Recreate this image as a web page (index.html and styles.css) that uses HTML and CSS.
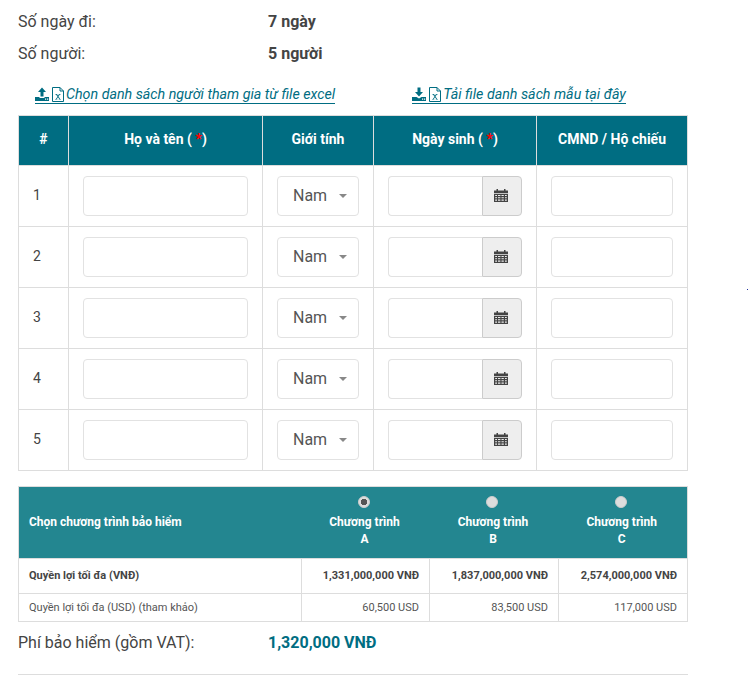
FILE: index.html
```html
<!DOCTYPE html>
<html lang="vi">
<head>
<meta charset="utf-8">
<title>Bảo hiểm</title>
<link rel="stylesheet" href="styles.css">
</head>
<body>
<main class="page">
  <div class="info"><span class="info-label">Số ngày đi:</span><strong class="info-value">7 ngày</strong></div>
  <div class="info"><span class="info-label">Số người:</span><strong class="info-value">5 người</strong></div>

  <div class="links">
    <a class="file-link first" href="#">
      <svg class="ico" viewBox="0 0 14 14"><path d="M7 0.5 11 5H8.5V9.5H5.5V5H3ZM0 10H4.5V11H9.5V10H14V14H0ZM10 11.6h1.2v1.2H10ZM12 11.6h1.2v1.2H12Z" fill="#006d82" fill-rule="evenodd"/></svg>
      <svg class="xls" viewBox="0 0 12 15"><path d="M.5.5H8L11.5 4V14.5H.5ZM8 .5V4H11.5" fill="none" stroke="#006d82"/><path d="M3.2 7H5L6 8.7 7 7H8.7V7.5L7.9 7.6 6.5 9.6 8.2 12 8.9 12.1V12.6H6.8V12.1L7.2 12 6 10.3 4.8 12 5.3 12.1V12.6H3.1V12.1L3.8 12 5.5 9.7 4 7.6 3.2 7.5Z" fill="#006d82"/></svg>
      <span>Chọn danh sách người tham gia từ file excel</span>
    </a>
    <a class="file-link" href="#">
      <svg class="ico" viewBox="0 0 14 14"><path d="M5.5 0.5H8.5V5H11L7 9.5 3 5H5.5ZM0 10H4.5L7 11.5 9.5 10H14V14H0ZM10 11.6h1.2v1.2H10ZM12 11.6h1.2v1.2H12Z" fill="#006d82" fill-rule="evenodd"/></svg>
      <svg class="xls" viewBox="0 0 12 15"><path d="M.5.5H8L11.5 4V14.5H.5ZM8 .5V4H11.5" fill="none" stroke="#006d82"/><path d="M3.2 7H5L6 8.7 7 7H8.7V7.5L7.9 7.6 6.5 9.6 8.2 12 8.9 12.1V12.6H6.8V12.1L7.2 12 6 10.3 4.8 12 5.3 12.1V12.6H3.1V12.1L3.8 12 5.5 9.7 4 7.6 3.2 7.5Z" fill="#006d82"/></svg>
      <span>Tải file danh sách mẫu tại đây</span>
    </a>
  </div>

  <table class="people">
    <colgroup>
      <col class="c-num"><col class="c-name"><col class="c-sex"><col class="c-dob"><col class="c-id">
    </colgroup>
    <thead>
      <tr><th>#</th><th>Họ và tên ( <span class="req">*</span>)</th><th>Giới tính</th><th>Ngày sinh ( <span class="req">*</span>)</th><th>CMND / Hộ chiếu</th></tr>
    </thead>
    <tbody>
      <tr>
        <td class="num">1</td>
        <td><div class="field"></div></td>
        <td><div class="select"><span>Nam</span><i class="caret"></i></div></td>
        <td><div class="date"><div class="date-input"></div><div class="date-btn"><svg class="cal" viewBox="0 0 14 14"><path d="M0 2.5H2.5V1H4V2.5H10V1H11.5V2.5H14V5H0Z" fill="#444"/><path d="M0 5.7H14V14H0ZM1.2 6.9V8H3V6.9ZM4 6.9V8H6.4V6.9ZM7.5 6.9V8H9.8V6.9ZM11 6.9V8H12.8V6.9ZM1.2 9.2V10.3H3V9.2ZM4 9.2V10.3H6.4V9.2ZM7.5 9.2V10.3H9.8V9.2ZM11 9.2V10.3H12.8V9.2ZM1.2 11.5V12.7H3V11.5ZM4 11.5V12.7H6.4V11.5ZM7.5 11.5V12.7H9.8V11.5ZM11 11.5V12.7H12.8V11.5Z" fill="#444" fill-rule="evenodd"/></svg></div></div></td>
        <td><div class="field"></div></td>
      </tr>
      <tr>
        <td class="num">2</td>
        <td><div class="field"></div></td>
        <td><div class="select"><span>Nam</span><i class="caret"></i></div></td>
        <td><div class="date"><div class="date-input"></div><div class="date-btn"><svg class="cal" viewBox="0 0 14 14"><path d="M0 2.5H2.5V1H4V2.5H10V1H11.5V2.5H14V5H0Z" fill="#444"/><path d="M0 5.7H14V14H0ZM1.2 6.9V8H3V6.9ZM4 6.9V8H6.4V6.9ZM7.5 6.9V8H9.8V6.9ZM11 6.9V8H12.8V6.9ZM1.2 9.2V10.3H3V9.2ZM4 9.2V10.3H6.4V9.2ZM7.5 9.2V10.3H9.8V9.2ZM11 9.2V10.3H12.8V9.2ZM1.2 11.5V12.7H3V11.5ZM4 11.5V12.7H6.4V11.5ZM7.5 11.5V12.7H9.8V11.5ZM11 11.5V12.7H12.8V11.5Z" fill="#444" fill-rule="evenodd"/></svg></div></div></td>
        <td><div class="field"></div></td>
      </tr>
      <tr>
        <td class="num">3</td>
        <td><div class="field"></div></td>
        <td><div class="select"><span>Nam</span><i class="caret"></i></div></td>
        <td><div class="date"><div class="date-input"></div><div class="date-btn"><svg class="cal" viewBox="0 0 14 14"><path d="M0 2.5H2.5V1H4V2.5H10V1H11.5V2.5H14V5H0Z" fill="#444"/><path d="M0 5.7H14V14H0ZM1.2 6.9V8H3V6.9ZM4 6.9V8H6.4V6.9ZM7.5 6.9V8H9.8V6.9ZM11 6.9V8H12.8V6.9ZM1.2 9.2V10.3H3V9.2ZM4 9.2V10.3H6.4V9.2ZM7.5 9.2V10.3H9.8V9.2ZM11 9.2V10.3H12.8V9.2ZM1.2 11.5V12.7H3V11.5ZM4 11.5V12.7H6.4V11.5ZM7.5 11.5V12.7H9.8V11.5ZM11 11.5V12.7H12.8V11.5Z" fill="#444" fill-rule="evenodd"/></svg></div></div></td>
        <td><div class="field"></div></td>
      </tr>
      <tr>
        <td class="num">4</td>
        <td><div class="field"></div></td>
        <td><div class="select"><span>Nam</span><i class="caret"></i></div></td>
        <td><div class="date"><div class="date-input"></div><div class="date-btn"><svg class="cal" viewBox="0 0 14 14"><path d="M0 2.5H2.5V1H4V2.5H10V1H11.5V2.5H14V5H0Z" fill="#444"/><path d="M0 5.7H14V14H0ZM1.2 6.9V8H3V6.9ZM4 6.9V8H6.4V6.9ZM7.5 6.9V8H9.8V6.9ZM11 6.9V8H12.8V6.9ZM1.2 9.2V10.3H3V9.2ZM4 9.2V10.3H6.4V9.2ZM7.5 9.2V10.3H9.8V9.2ZM11 9.2V10.3H12.8V9.2ZM1.2 11.5V12.7H3V11.5ZM4 11.5V12.7H6.4V11.5ZM7.5 11.5V12.7H9.8V11.5ZM11 11.5V12.7H12.8V11.5Z" fill="#444" fill-rule="evenodd"/></svg></div></div></td>
        <td><div class="field"></div></td>
      </tr>
      <tr>
        <td class="num">5</td>
        <td><div class="field"></div></td>
        <td><div class="select"><span>Nam</span><i class="caret"></i></div></td>
        <td><div class="date"><div class="date-input"></div><div class="date-btn"><svg class="cal" viewBox="0 0 14 14"><path d="M0 2.5H2.5V1H4V2.5H10V1H11.5V2.5H14V5H0Z" fill="#444"/><path d="M0 5.7H14V14H0ZM1.2 6.9V8H3V6.9ZM4 6.9V8H6.4V6.9ZM7.5 6.9V8H9.8V6.9ZM11 6.9V8H12.8V6.9ZM1.2 9.2V10.3H3V9.2ZM4 9.2V10.3H6.4V9.2ZM7.5 9.2V10.3H9.8V9.2ZM11 9.2V10.3H12.8V9.2ZM1.2 11.5V12.7H3V11.5ZM4 11.5V12.7H6.4V11.5ZM7.5 11.5V12.7H9.8V11.5ZM11 11.5V12.7H12.8V11.5Z" fill="#444" fill-rule="evenodd"/></svg></div></div></td>
        <td><div class="field"></div></td>
      </tr>
    </tbody>
  </table>

  <table class="plans">
    <colgroup><col class="p-label"><col class="p-a"><col class="p-b"><col class="p-c"></colgroup>
    <thead>
      <tr>
        <th class="plan-title">Chọn chương trình bảo hiểm</th>
        <th><span class="radio checked"></span><span class="plan-name">Chương trình<br>A</span></th>
        <th><span class="radio"></span><span class="plan-name">Chương trình<br>B</span></th>
        <th><span class="radio"></span><span class="plan-name">Chương trình<br>C</span></th>
      </tr>
    </thead>
    <tbody>
      <tr class="vnd"><td>Quyền lợi tối đa (VNĐ)</td><td>1,331,000,000 VNĐ</td><td>1,837,000,000 VNĐ</td><td>2,574,000,000 VNĐ</td></tr>
      <tr class="usd"><td>Quyền lợi tối đa (USD) (tham khảo)</td><td>60,500 USD</td><td>83,500 USD</td><td>117,000 USD</td></tr>
    </tbody>
  </table>

  <div class="fee"><span class="fee-label">Phí bảo hiểm (gồm VAT):</span><strong class="fee-value">1,320,000 VNĐ</strong></div>
  <hr class="rule">
</main>
<i class="speck"></i>
</body>
</html>
```
FILE: styles.css
```css
* { box-sizing: border-box; }
html, body { margin: 0; padding: 0; background: #fff; }
body {
  font-family: Roboto, "Noto Sans", sans-serif;
  color: #444;
  font-size: 16px;
  height: 675px;
  overflow: hidden;
  position: relative;
}
.page { width: 670px; margin-left: 18px; padding-top: 6px; }
.info { display: flex; height: 32px; align-items: center; line-height: 32px; }
.info-label { width: 250px; }
.info-value { font-weight: 700; }

.links { display: flex; margin-top: 15px; height: 30px; padding-left: 17px; }
.file-link {
  display: flex; align-items: center; align-self: flex-start; gap: 2.5px;
  height: 19px;
  color: #006d82;
  font-style: italic;
  font-size: 14.25px;
  text-decoration: none;
  border-bottom: 1px solid #006d82;
  white-space: nowrap;
}
.file-link.first { margin-right: 77px; }
.ico { width: 14px; height: 14px; flex: none; }
.xls { width: 12px; height: 15px; flex: none; }

table { border-collapse: collapse; table-layout: fixed; width: 669px; }
.people th, .people td { border: 1px solid #ddd; padding: 0; }
.c-num { width: 50px; } .c-name { width: 194px; } .c-sex { width: 111px; } .c-dob { width: 163px; } .c-id { width: 151px; }
.people th {
  background: #006d82;
  color: #fff;
  height: 50px;
  font-size: 14px;
  font-weight: 700;
  text-align: center;
  padding-bottom: 3px;
}
.req { color: #f00; font-weight: 900; }
.people td { height: 61px; padding: 0 14px; vertical-align: middle; }
.people td.num { font-size: 14px; padding-left: 14px; padding-bottom: 2px; }
.field { height: 40px; background: #fff; border: 1px solid #e2e2e2; border-radius: 4px; }
.select {
  height: 40px; border: 1px solid #e2e2e2; border-radius: 4px;
  display: flex; align-items: center; padding: 0 0 2px 15px;
  font-size: 16px; color: #555;
}
.caret {
  width: 0; height: 0; margin-left: 12px; margin-top: 2px;
  border-left: 4px solid transparent; border-right: 4px solid transparent; border-top: 4px solid #888;
}
.date { display: flex; height: 40px; }
.date-input { flex: 1; border: 1px solid #e2e2e2; border-right: 0; border-radius: 4px 0 0 4px; }
.date-btn {
  width: 40px; background: #eee; border: 1px solid #ccc; border-radius: 0 4px 4px 0;
  display: flex; align-items: center; justify-content: center; padding: 0 2px 3px 0;
}
.cal { width: 14px; height: 14px; }

.plans { margin-top: 15px; }
.p-label { width: 283px; } .p-a { width: 128px; } .p-b { width: 129px; } .p-c { width: 129px; }
.plans th { background: #238690; color: #fff; font-size: 12px; font-weight: 700; height: 72px; padding: 0 2px 2px 0; text-align: center; vertical-align: middle; border: 1px solid #ddd; border-left: 0; border-right: 0; }
.plans th:first-child { border-left: 1px solid #ddd; }
.plans th:last-child { border-right: 1px solid #ddd; }
.plans th.plan-title { text-align: left; padding-left: 10px; }
.radio {
  display: block; width: 12px; height: 12px; margin: 0 auto 6px; border-radius: 50%;
  background: #ddd; border: 1px solid #ccc;
  position: relative; left: -1px;
}
.radio.checked { background: radial-gradient(circle, #555 0 3px, #ddd 3.5px); }
.plan-name { display: block; line-height: 17px; }
.plans td { border: 1px solid #ddd; font-size: 11px; padding: 0 10px; text-align: right; color: #555; }
.plans td:first-child { text-align: left; }
.vnd td { height: 35px; font-weight: 700; color: #444; padding-bottom: 2px; }
.usd td { height: 28px; }

.fee { display: flex; align-items: center; height: 41px; }
.fee-label { width: 250px; color: #444; }
.fee-value { color: #006d82; font-weight: 700; }
.rule { border: 0; border-top: 1px solid #ddd; margin: 11px 0 0; }
.speck { position: absolute; left: 747px; top: 289px; width: 1px; height: 1px; background: #2030a0; }
```
